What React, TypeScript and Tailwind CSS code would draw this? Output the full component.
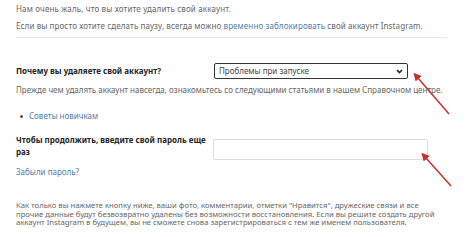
export default function App() {
  return (
    <div className="relative w-[474px] h-[237px] overflow-hidden bg-white px-[16px] pt-[3px] text-[8px] text-[#666] font-['Noto_Sans',sans-serif]">
      <p className="leading-[12px] tracking-[0.15px]">Нам очень жаль, что вы хотите удалить свой аккаунт.</p>
      <p className="mt-[5px] leading-[12px] tracking-[0.1px]">
        Если вы просто хотите сделать паузу, всегда можно{' '}
        <a className="text-[#4d7ea8]">временно заблокировать</a> свой аккаунт Instagram.
      </p>
      <div className="mt-[5px] w-[431px] border-b border-[#e6e6e6]" />

      <div className="mt-[25px] flex h-[16px] items-center">
        <div className="w-[198px] font-bold text-[#262626]">Почему вы удаляете свой аккаунт?</div>
        <div className="flex h-[16px] w-[194px] items-center justify-between rounded-[2px] border border-[#333] px-[4px] text-[#444]">
          <span>Проблемы при запуске</span>
          <svg width="7" height="5" viewBox="0 0 7 5">
            <path d="M1 1l2.5 2.5L6 1" fill="none" stroke="#222" strokeWidth="1.6" />
          </svg>
        </div>
      </div>

      <p className="mt-[5px] leading-[12px]">
        Прежде чем удалять аккаунт навсегда, ознакомьтесь со следующими статьями в нашем Справочном центре.
      </p>

      <ul className="mt-[14px] flex items-center gap-[6px] pl-[4px] leading-[12px]">
        <li className="h-[3px] w-[3px] rounded-full bg-[#555]" />
        <li className="text-[#4d7ea8]">Советы новичкам</li>
      </ul>

      <div className="mt-[12px] flex items-start">
        <div className="w-[197px] pr-[6px] font-bold leading-[12px] text-[#262626]">
          Чтобы продолжить, введите свой пароль еще раз
        </div>
        <div className="mt-[5px] h-[21px] w-[215px] rounded-[2px] border border-[#dcdcdc] bg-white" />
      </div>

      <p className="mt-[6px] leading-[12px] text-[#4d7ea8]">Забыли пароль?</p>

      <div className="mt-[23px] flex flex-col whitespace-nowrap text-[7.7px] leading-[8.7px]">
        <span>Как только вы нажмете кнопку ниже, ваши фото, комментарии, отметки "Нравится", дружеские связи и все</span>
        <span>прочие данные будут безвозвратно удалены без возможности восстановления. Если вы решите создать другой</span>
        <span>аккаунт Instagram в будущем, вы не сможете снова зарегистрироваться с тем же именем пользователя.</span>
      </div>

      <svg className="pointer-events-none absolute left-0 top-0" width="474" height="237">
        <defs>
          <marker id="ah" markerWidth="8" markerHeight="8" refX="1" refY="4" orient="auto" markerUnits="userSpaceOnUse">
            <path d="M0 0L8 4L0 8z" fill="#c9302c" />
          </marker>
        </defs>
        <line x1="449" y1="114" x2="418" y2="78" stroke="#c9302c" strokeWidth="1.5" markerEnd="url(#ah)" />
        <line x1="451" y1="186" x2="426" y2="158" stroke="#c9302c" strokeWidth="1.5" markerEnd="url(#ah)" />
      </svg>
    </div>
  );
}
